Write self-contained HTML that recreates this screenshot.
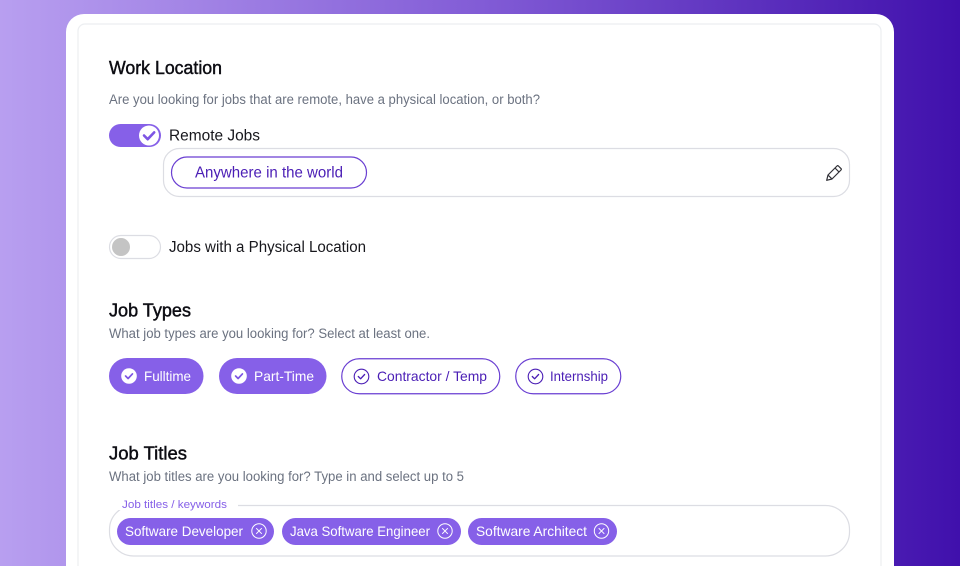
<!DOCTYPE html>
<html lang="en"><head><meta charset="utf-8"><title>Work Location</title>
<style>
html,body{margin:0;padding:0;width:960px;height:566px;overflow:hidden;background:#fff}
svg{display:block}
text{font-family:"Liberation Sans",sans-serif;white-space:pre}
.h{font-size:18px;fill:#0c0c12;stroke:#0c0c12;stroke-width:.45px}
.s{font-size:13.5px;fill:#6b7280}
.l{font-size:15.5px;fill:#17171c}
.w{font-size:14px;fill:#fff}
.p{font-size:14px;fill:#4a1db5}
</style></head><body>
<svg width="960" height="566" viewBox="0 0 960 566" xmlns="http://www.w3.org/2000/svg">
<defs><linearGradient id="g" x1="0" y1="0" x2="1" y2="0">
<stop offset="0" stop-color="#b89ff0"/><stop offset=".5" stop-color="#825cd6"/><stop offset="1" stop-color="#4010ac"/></linearGradient></defs>
<rect width="960" height="566" fill="url(#g)"/>
<path d="M66 580V32a18 18 0 0 1 18-18H876a18 18 0 0 1 18 18V580Z" fill="#fff"/>
<path d="M78 580V31a7 7 0 0 1 7-7H874a7 7 0 0 1 7 7V580" fill="none" stroke="#eceef1" stroke-width="1.2"/>

<text class="h" x="109" y="74" textLength="113" lengthAdjust="spacingAndGlyphs">Work Location</text>
<text class="s" x="109" y="104" textLength="431" lengthAdjust="spacingAndGlyphs">Are you looking for jobs that are remote, have a physical location, or both?</text>

<rect x="109" y="124" width="52" height="23" rx="11.500" fill="#8660e8"/>
<circle cx="149" cy="135.500" r="10" fill="#fff"/>
<path d="M144 135.500l3.700 3.700 6.500-6.800" fill="none" stroke="#7d55e4" stroke-width="2.600" stroke-linecap="round" stroke-linejoin="round"/>
<text class="l" x="169" y="140.500" textLength="91" lengthAdjust="spacingAndGlyphs">Remote Jobs</text>

<rect x="163.500" y="148.500" width="686" height="48" rx="16" fill="#fff" stroke="#dcdde3" stroke-width="1.200"/>
<rect x="171.500" y="157" width="195" height="31" rx="15.500" fill="#fff" stroke="#6a3fd2" stroke-width="1.200"/>
<text x="195" y="177.500" font-size="16" fill="#4a1db5" textLength="148" lengthAdjust="spacingAndGlyphs">Anywhere in the world</text>
<path d="M826.700 180.300l1.300-5.300 9-9a1 1 0 0 1 1.400 0l2.600 2.600a1 1 0 0 1 0 1.400l-9 9ZM828 175l4.300 4.300M835 168l4.300 4.300" fill="none" stroke="#303036" stroke-width="1.200" stroke-linejoin="round"/>

<rect x="109.500" y="235.500" width="51" height="23" rx="11.500" fill="#fff" stroke="#dcdde3" stroke-width="1.200"/>
<circle cx="121" cy="247" r="9" fill="#c4c4c4"/>
<text class="l" x="169" y="252" textLength="197" lengthAdjust="spacingAndGlyphs">Jobs with a Physical Location</text>

<text class="h" x="109" y="316.500" textLength="82" lengthAdjust="spacingAndGlyphs">Job Types</text>
<text class="s" x="109" y="338" textLength="321" lengthAdjust="spacingAndGlyphs">What job types are you looking for? Select at least one.</text>

<rect x="109" y="358" width="94.500" height="36" rx="18" fill="#8660e8"/>
<circle cx="129" cy="376" r="7.800" fill="#fff"/>
<path d="M125.600 376l2.500 2.500 4.300-4.600" fill="none" stroke="#7d55e4" stroke-width="1.700" stroke-linecap="round" stroke-linejoin="round"/>
<text class="w" x="144" y="381" textLength="47" lengthAdjust="spacingAndGlyphs">Fulltime</text>

<rect x="219" y="358" width="107.500" height="36" rx="18" fill="#8660e8"/>
<circle cx="239" cy="376" r="7.800" fill="#fff"/>
<path d="M235.600 376l2.500 2.500 4.300-4.600" fill="none" stroke="#7d55e4" stroke-width="1.700" stroke-linecap="round" stroke-linejoin="round"/>
<text class="w" x="254" y="381" textLength="60" lengthAdjust="spacingAndGlyphs">Part-Time</text>

<rect x="341.750" y="358.750" width="158" height="35" rx="17.500" fill="#fff" stroke="#6a3fd2" stroke-width="1.200"/>
<circle cx="361.500" cy="376.500" r="7.300" fill="none" stroke="#4a1db5" stroke-width="1.100"/>
<path d="M358.300 376.500l2.300 2.300 4-4.300" fill="none" stroke="#4a1db5" stroke-width="1.300" stroke-linecap="round" stroke-linejoin="round"/>
<text class="p" x="377" y="381" textLength="110" lengthAdjust="spacingAndGlyphs">Contractor / Temp</text>

<rect x="515.750" y="358.750" width="105" height="35" rx="17.500" fill="#fff" stroke="#6a3fd2" stroke-width="1.200"/>
<circle cx="535.500" cy="376.500" r="7.300" fill="none" stroke="#4a1db5" stroke-width="1.100"/>
<path d="M532.300 376.500l2.300 2.300 4-4.300" fill="none" stroke="#4a1db5" stroke-width="1.300" stroke-linecap="round" stroke-linejoin="round"/>
<text class="p" x="550" y="381" textLength="58" lengthAdjust="spacingAndGlyphs">Internship</text>

<text class="h" x="109" y="459.500" textLength="78" lengthAdjust="spacingAndGlyphs">Job Titles</text>
<text class="s" x="109" y="481" textLength="355" lengthAdjust="spacingAndGlyphs">What job titles are you looking for? Type in and select up to 5</text>

<rect x="109.500" y="505.500" width="740" height="50.500" rx="24" fill="#fff" stroke="#dcdde3" stroke-width="1.200"/>
<rect x="118" y="500" width="120" height="10" fill="#fff"/>
<text x="122" y="508" font-size="11" fill="#8660e8" textLength="105" lengthAdjust="spacingAndGlyphs">Job titles / keywords</text>

<rect x="117" y="518" width="157" height="27" rx="13.500" fill="#8660e8"/>
<text class="w" x="125" y="536" textLength="118" lengthAdjust="spacingAndGlyphs">Software Developer</text>
<circle cx="259" cy="531" r="7.200" fill="none" stroke="#fff" stroke-width="1"/>
<path d="M256.200 528.200l5.600 5.600M261.800 528.200l-5.600 5.600" stroke="#fff" stroke-width="1"/>

<rect x="282" y="518" width="179" height="27" rx="13.500" fill="#8660e8"/>
<text class="w" x="290" y="536" textLength="140" lengthAdjust="spacingAndGlyphs">Java Software Engineer</text>
<circle cx="445" cy="531" r="7.200" fill="none" stroke="#fff" stroke-width="1"/>
<path d="M442.200 528.200l5.600 5.600M447.800 528.200l-5.600 5.600" stroke="#fff" stroke-width="1"/>

<rect x="468" y="518" width="149" height="27" rx="13.500" fill="#8660e8"/>
<text class="w" x="476" y="536" textLength="111" lengthAdjust="spacingAndGlyphs">Software Architect</text>
<circle cx="601.500" cy="531" r="7.200" fill="none" stroke="#fff" stroke-width="1"/>
<path d="M598.700 528.200l5.600 5.600M604.300 528.200l-5.600 5.600" stroke="#fff" stroke-width="1"/>
</svg>
</body></html>
